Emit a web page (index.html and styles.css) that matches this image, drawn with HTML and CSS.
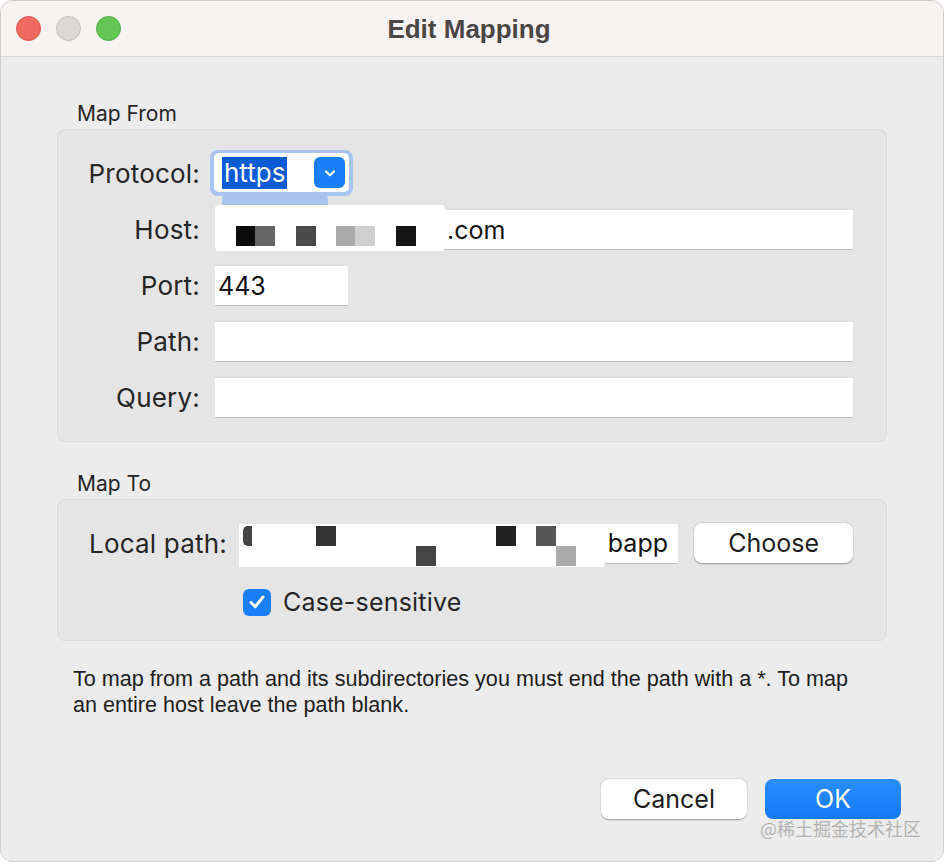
FILE: index.html
```html
<!DOCTYPE html>
<html>
<head>
<meta charset="utf-8">
<link rel="stylesheet" href="styles.css">
</head>
<body>
<div class="window">
  <div class="titlebar">
    <div class="lights">
      <span class="light red"></span>
      <span class="light grey"></span>
      <span class="light green"></span>
    </div>
    <div class="title">Edit Mapping</div>
    <div></div>
  </div>
  <div class="content">
    <div class="group-label">Map From</div>
    <div class="group from">
      <div class="form">
        <div class="label">Protocol:</div>
        <div class="popup-cell">
          <div class="popup-ring">
            <div class="popup">
              <span class="sel">https</span>
              <span class="chev"><svg width="14" height="10" viewBox="0 0 14 10"><path d="M3 3.5 L7 7.2 L11 3.5" fill="none" stroke="#fff" stroke-width="2.2" stroke-linecap="round" stroke-linejoin="round"/></svg></span>
            </div>
          </div>
          <div class="ring-smear"></div>
        </div>
        <div class="label">Host:</div>
        <div class="field host">
          <div class="mask host-mask"></div>
          <span class="px" style="left:21px;top:16px;background:#0b0b0b"></span>
          <span class="px" style="left:40px;top:16px;background:#666"></span>
          <span class="px" style="left:81px;top:16px;background:#4a4a4a"></span>
          <span class="px" style="left:121px;top:16px;background:#ababab"></span>
          <span class="px" style="left:140px;top:16px;background:#cfcfcf"></span>
          <span class="px" style="left:181px;top:16px;background:#141414"></span>
          <span class="ftext host-text">.com</span>
        </div>
        <div class="label">Port:</div>
        <div class="field port"><span class="ftext">443</span></div>
        <div class="label">Path:</div>
        <div class="field"></div>
        <div class="label">Query:</div>
        <div class="field"></div>
      </div>
    </div>

    <div class="group-label to-label">Map To</div>
    <div class="group to">
      <div class="local-row">
        <div class="label local-label">Local path:</div>
        <div class="field local">
          <div class="mask local-mask"></div>
          <span class="px half" style="left:4px;top:2px;background:#444"></span>
          <span class="px" style="left:77px;top:2px;background:#333"></span>
          <span class="px" style="left:177px;top:22px;background:#454545"></span>
          <span class="px" style="left:257px;top:2px;background:#222"></span>
          <span class="px" style="left:297px;top:2px;background:#555"></span>
          <span class="px" style="left:317px;top:22px;background:#ababab"></span>
          <span class="ftext local-text">bapp</span>
        </div>
        <div class="btn choose">Choose</div>
      </div>
      <div class="check-row">
        <span class="checkbox"><svg width="20" height="18" viewBox="0 0 20 18"><path d="M4 9.5 L8.3 13.6 L16 4" fill="none" stroke="#fff" stroke-width="3" stroke-linecap="round" stroke-linejoin="round"/></svg></span>
        <span class="check-label">Case-sensitive</span>
      </div>
    </div>

    <p class="help">To map from a path and its subdirectories you must end the path with a *. To map<br>an entire host leave the path blank.</p>

    <div class="buttons">
      <div class="btn cancel">Cancel</div>
      <div class="btn ok">OK</div>
    </div>
  </div>
  <div class="watermark">@稀土掘金技术社区</div>
</div>
</body>
</html>
```
FILE: styles.css
```css
* { box-sizing: border-box; }
html, body { margin: 0; padding: 0; background: #ffffff; }
body { font-family: "Inter", "Liberation Sans", sans-serif; color: #1e1e1e; }

.window {
  position: relative;
  width: 944px;
  height: 862px;
  background: #ececec;
  border-radius: 12px;
  overflow: hidden;
  border: 1px solid #d0cccc;
}

.titlebar {
  height: 56px;
  background: #f7f3f2;
  border-bottom: 1px solid #d8d4d3;
  display: grid;
  grid-template-columns: 1fr auto 1fr;
  align-items: center;
}
.lights { display: flex; gap: 15px; padding-left: 15px; }
.light { width: 25px; height: 25px; border-radius: 50%; display: block; }
.light.red { background: #ee6a5f; border: 1px solid #d9564c; }
.light.grey { background: #dcd8d8; border: 1px solid #c4c0c0; }
.light.green { background: #62c554; border: 1px solid #4eae41; }
.title {
  font-family: "Liberation Sans", sans-serif;
  font-weight: bold;
  font-size: 26px;
  color: #4b4646;
  padding-top: 1px;
  padding-right: 6px;
}

.content { padding: 0 56px 0 56px; }

.group-label {
  font-size: 21px;
  line-height: 24px;
  color: #262626;
  padding-left: 20px;
  margin-top: 45px;
}
.to-label { margin-top: 30px; }

.group {
  margin-top: 3px;
  background: #e5e5e5;
  border: 1px solid #dadada;
  border-radius: 8px;
}
.group.from { height: 313px; padding: 24px 33px 0 0; }
.group.to { height: 142px; padding: 23px 33px 0 31px; }

.form {
  display: grid;
  grid-template-columns: 142px 1fr;
  grid-auto-rows: 39px;
  column-gap: 15px;
  row-gap: 17px;
  align-items: center;
}
.label {
  font-size: 26px;
  letter-spacing: 0.2px;
  color: #262626;
  text-align: right;
}

.field {
  position: relative;
  height: 39px;
  background: #ffffff;
  box-shadow: 0 1px 0 #bdbdbd, 0 -0.5px 0 #e2e2e2;
  display: flex;
  align-items: center;
}
.field.port { width: 133px; }
.ftext { font-size: 25px; color: #111; padding-left: 3px; position: relative; }
.host-text { padding-left: 232px; }
.local-text { padding-left: 369px; }

.mask { position: absolute; background: #ffffff; }
.host-mask { left: 0; top: -5px; width: 230px; height: 46px; border-radius: 4px; }
.local-mask { left: 0; top: 0; width: 366px; height: 43px; border-radius: 0 0 4px 0; }
.px { position: absolute; width: 20px; height: 20px; display: block; }
.px.half { width: 9px; border-radius: 5px 0 0 5px; }

.popup-cell { position: relative; height: 39px; }
.popup-ring {
  position: absolute;
  left: -5px; top: -4px;
  width: 143px; height: 46px;
  background: #a8c4ec;
  border-radius: 8px;
  padding: 3px 4px;
  z-index: 1;
}
.ring-smear {
  position: absolute;
  left: 7px; top: 38px;
  width: 106px; height: 16px;
  background: #a8c4ec;
  border-radius: 8px 8px 0 0;
  z-index: 0;
}
.popup {
  height: 39px;
  background: #ffffff;
  border-radius: 5px;
  display: flex;
  align-items: center;
  padding: 0 4px 0 8px;
  justify-content: space-between;
}
.sel {
  background: #0b5bd5;
  color: #ffffff;
  font-size: 26px;
  line-height: 32px;
  padding: 0 2px;
}
.chev {
  width: 31px; height: 31px;
  background: #1a7ef6;
  border-radius: 6px;
  display: flex; align-items: center; justify-content: center;
}
.host { z-index: 2; }

.local-row { display: flex; align-items: center; }
.local-label { text-align: left; width: 150px; }
.field.local { width: 440px; }
.btn {
  height: 40px;
  border-radius: 8px;
  font-size: 25px;
  display: flex; align-items: center; justify-content: center;
}
.choose {
  margin-left: 16px;
  width: 159px;
  background: #ffffff;
  color: #1e1e1e;
  box-shadow: 0 0.5px 1.5px rgba(0,0,0,0.35);
}

.check-row { display: flex; align-items: center; margin-top: 24px; padding-left: 154px; }
.checkbox {
  width: 28px; height: 27px;
  background: #1a7ff7;
  border-radius: 6px;
  display: flex; align-items: center; justify-content: center;
}
.check-label { font-size: 25px; letter-spacing: 0.2px; color: #262626; margin-left: 12px; }

.help {
  font-family: "Liberation Sans", sans-serif;
  font-size: 21.6px;
  line-height: 26px;
  color: #1e1e1e;
  margin: 25px 0 0 16px;
}

.buttons { display: flex; justify-content: flex-end; gap: 18px; margin-top: 61px; margin-right: -14px; }
.cancel { width: 146px; background: #ffffff; color: #1e1e1e; box-shadow: 0 0.5px 1.5px rgba(0,0,0,0.35); }
.ok { width: 136px; background: linear-gradient(#2a8cfc, #137af5); color: #ffffff; }

.watermark {
  position: absolute;
  right: 22px; bottom: 20px;
  font-family: "Noto Sans CJK SC", sans-serif;
  font-size: 18px;
  color: #b3b3b3;
}
```
